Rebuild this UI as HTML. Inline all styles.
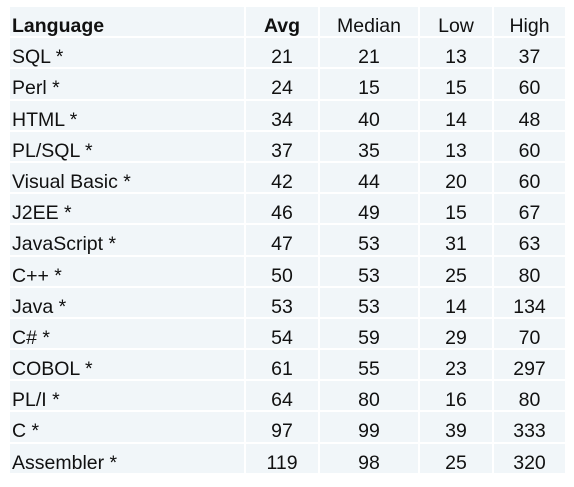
<!DOCTYPE html>
<html><head><style>
html,body{margin:0;padding:0;background:#fff;width:574px;height:487px;overflow:hidden}
table{position:absolute;left:8px;top:5px;border-collapse:separate;border-spacing:2px;font-family:"Liberation Sans",Arial,sans-serif;font-size:19.5px;color:#111}
td,th{background:#f1f6f9;height:29.2px;box-sizing:border-box;padding:10px 0 0 0;line-height:19px;text-align:center;font-weight:normal;vertical-align:top}
td:first-child,th:first-child{text-align:left;padding-left:2px;width:232px}
th.b{font-weight:bold}
</style></head><body>
<table>
<colgroup><col style="width:234px"><col style="width:72px"><col style="width:98px"><col style="width:72px"><col style="width:71px"></colgroup>
<tr><th class="b">Language</th><th class="b">Avg</th><th>Median</th><th>Low</th><th>High</th></tr>
<tr><td>SQL *</td><td>21</td><td>21</td><td>13</td><td>37</td></tr>
<tr><td>Perl *</td><td>24</td><td>15</td><td>15</td><td>60</td></tr>
<tr><td>HTML *</td><td>34</td><td>40</td><td>14</td><td>48</td></tr>
<tr><td>PL/SQL *</td><td>37</td><td>35</td><td>13</td><td>60</td></tr>
<tr><td>Visual Basic *</td><td>42</td><td>44</td><td>20</td><td>60</td></tr>
<tr><td>J2EE *</td><td>46</td><td>49</td><td>15</td><td>67</td></tr>
<tr><td>JavaScript *</td><td>47</td><td>53</td><td>31</td><td>63</td></tr>
<tr><td>C++ *</td><td>50</td><td>53</td><td>25</td><td>80</td></tr>
<tr><td>Java *</td><td>53</td><td>53</td><td>14</td><td>134</td></tr>
<tr><td>C# *</td><td>54</td><td>59</td><td>29</td><td>70</td></tr>
<tr><td>COBOL *</td><td>61</td><td>55</td><td>23</td><td>297</td></tr>
<tr><td>PL/I *</td><td>64</td><td>80</td><td>16</td><td>80</td></tr>
<tr><td>C *</td><td>97</td><td>99</td><td>39</td><td>333</td></tr>
<tr><td>Assembler *</td><td>119</td><td>98</td><td>25</td><td>320</td></tr>
</table>
</body></html>
